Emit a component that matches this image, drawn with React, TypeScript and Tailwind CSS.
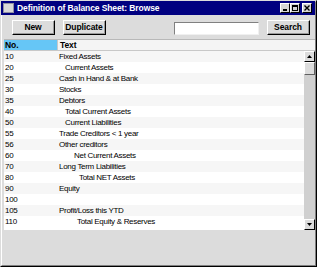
import React from "react";

const rows: { no: string; text: string; pad: string }[] = [
  { no: "10", text: "Fixed Assets", pad: "pl-0" },
  { no: "20", text: "Current Assets", pad: "pl-[6px]" },
  { no: "25", text: "Cash in Hand & at Bank", pad: "pl-0" },
  { no: "30", text: "Stocks", pad: "pl-0" },
  { no: "35", text: "Debtors", pad: "pl-0" },
  { no: "40", text: "Total Current Assets", pad: "pl-[6px]" },
  { no: "50", text: "Current Liabilities", pad: "pl-[6px]" },
  { no: "55", text: "Trade Creditors < 1 year", pad: "pl-0" },
  { no: "56", text: "Other creditors", pad: "pl-0" },
  { no: "60", text: "Net Current Assets", pad: "pl-[15px]" },
  { no: "70", text: "Long Term Liabilities", pad: "pl-0" },
  { no: "80", text: "Total NET Assets", pad: "pl-[20px]" },
  { no: "90", text: "Equity", pad: "pl-0" },
  { no: "100", text: "", pad: "pl-0" },
  { no: "105", text: "Profit/Loss this YTD", pad: "pl-0" },
  { no: "110", text: "Total Equity & Reserves", pad: "pl-[18px]" },
];

function Btn({ label, w }: { label: string; w: string }) {
  return (
    <div className={`${w} h-[15px] border-t border-l border-white border-r border-b border-r-black border-b-black bg-[#dcdcdc]`}>
      <div className="h-full w-full border-r border-b border-[#9a9a9a] flex items-center justify-center text-[8.5px] font-bold tracking-[-0.1px] text-black leading-none">
        {label}
      </div>
    </div>
  );
}

function WinBtn({ children }: { children: React.ReactNode }) {
  return (
    <div className="w-[10px] h-[10px] bg-[#d4d4d4] border-t border-l border-white border-r border-b border-r-black border-b-black flex items-center justify-center">
      {children}
    </div>
  );
}

export default function App() {
  return (
    <div
      className="w-[317px] h-[267px] bg-[#dcdcdc] border-t border-l border-[#dcdcdc] border-r border-b border-r-black border-b-black"
      style={{ fontFamily: '"Liberation Sans", Arial, sans-serif' }}
    >
      <div className="w-full h-full flex flex-col border-t border-l border-white border-r border-b border-r-[#808080] border-b-[#808080]">
        {/* title bar */}
        <div className="h-[14px] bg-[#000080] flex items-center pl-[2px] pr-[3px] -mt-[1px] -ml-[1px]">
          <div className="w-[11px] h-[10px] bg-[#d8d8d8] border border-[#9090a0]" />
          <div className="ml-[3px] text-white text-[8.5px] font-bold tracking-[-0.1px] leading-none">
            Definition of Balance Sheet: Browse
          </div>
          <div className="ml-auto flex items-center">
            <WinBtn>
              <div className="w-[4px] h-[2px] bg-black mt-[4px] -ml-[1px]" />
            </WinBtn>
            <WinBtn>
              <div className="w-[6px] h-[6px] border border-black border-t-2" />
            </WinBtn>
            <div className="ml-[2px]">
              <WinBtn>
                <svg width="6" height="6" viewBox="0 0 6 6">
                  <path d="M0.5 0.5 L5.5 5.5 M5.5 0.5 L0.5 5.5" stroke="black" strokeWidth="1.4" />
                </svg>
              </WinBtn>
            </div>
          </div>
        </div>

        {/* toolbar */}
        <div className="flex items-center h-[19px] mt-[3px] pl-[10px]">
          <Btn label="New" w="w-[43px]" />
          <div className="ml-[8px]">
            <Btn label="Duplicate" w="w-[43px]" />
          </div>
          <div className="ml-auto w-[85px] h-[13px] bg-white border-t border-l border-[#808080] border-r border-b border-r-[#f0f0f0] border-b-[#f0f0f0] mt-[1px]" />
          <div className="ml-[8px] mr-[5px]">
            <Btn label="Search" w="w-[43px]" />
          </div>
        </div>

        {/* list */}
        <div className="mt-[2px] ml-[2px] h-[191px] flex flex-col bg-white border-t border-[#b8b8b8]">
          <div className="h-[11px] flex bg-[#f4f4f4] border-b border-[#c8c8c8] text-[8.5px] font-bold tracking-[-0.1px] leading-none">
            <div className="w-[54px] bg-[#66c6f6] flex items-center pl-[1px] border-r border-[#c8c8c8]">No.</div>
            <div className="flex items-center pl-[2px]">Text</div>
          </div>
          <div className="flex flex-1 min-h-0">
            <div className="flex-1 flex flex-col text-[8px] tracking-[-0.3px] text-black leading-none">
              {rows.map((r, i) => (
                <div
                  key={r.no}
                  className={`h-[11px] flex items-center ${i % 2 === 0 ? "bg-[#f6f6f6]" : "bg-white"}`}
                >
                  <div className="w-[55px] pl-[1px]">{r.no}</div>
                  <div className={r.pad}>{r.text}</div>
                </div>
              ))}
            </div>
            <div className="w-[11px] flex flex-col bg-[#d0d0d0]">
              <div className="h-[11px] bg-[#dcdcdc] border-t border-l border-white border-r border-b border-r-black border-b-black flex items-center justify-center">
                <svg width="5" height="3" viewBox="0 0 5 3">
                  <path d="M2.5 0 L5 3 L0 3 Z" fill="black" />
                </svg>
              </div>
              <div className="h-[13px] bg-[#dcdcdc] border-t border-l border-white border-r border-b border-r-[#606060] border-b-[#606060]" />
              <div className="flex-1" />
              <div className="h-[11px] bg-[#dcdcdc] border-t border-l border-white border-r border-b border-r-black border-b-black flex items-center justify-center">
                <svg width="5" height="3" viewBox="0 0 5 3">
                  <path d="M0 0 L5 0 L2.5 3 Z" fill="black" />
                </svg>
              </div>
            </div>
          </div>
        </div>
        <div className="flex-1" />
      </div>
    </div>
  );
}
